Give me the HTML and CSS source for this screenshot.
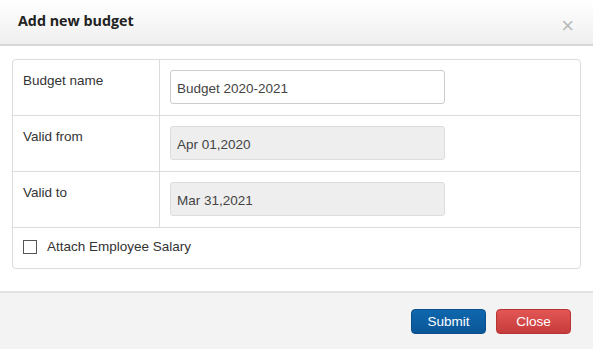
FILE: index.html
```html
<!DOCTYPE html>
<html lang="en">
<head>
    <meta charset="UTF-8">
    <title>Add new budget</title>
    <link rel="stylesheet" href="styles.css">
</head>
<body>

    <div class="modal">
        <!-- Заголовок -->
        <div class="modal-header">
            <h4>Add new budget</h4>
            <span class="close">&times;</span>
        </div>

        <!-- Форма -->
        <div class="modal-body">
            <div class="panel">
                <div class="row">
                    <div class="label">Budget name</div>
                    <div class="field"><input type="text" value="Budget 2020-2021"></div>
                </div>
                <div class="row">
                    <div class="label">Valid from</div>
                    <div class="field"><input type="text" value="Apr 01,2020" readonly></div>
                </div>
                <div class="row">
                    <div class="label">Valid to</div>
                    <div class="field"><input type="text" value="Mar 31,2021" readonly></div>
                </div>
                <label class="check-row">
                    <span class="checkbox"></span>
                    Attach Employee Salary
                </label>
            </div>
        </div>

        <div class="modal-footer">
            <button class="btn btn-primary">Submit</button>
            <button class="btn btn-danger">Close</button>
        </div>
    </div>

</body>
</html>
```

FILE: styles.css
```css
* {
    box-sizing: border-box;
    margin: 0;
    padding: 0;
}

body {
    font-family: 'Liberation Sans', Arial, sans-serif;
    font-size: 13.5px;
    color: #333;
    background: #fff;
}

.modal {
    width: 593px;
    height: 349px;
    display: flex;
    flex-direction: column;
}

/* Заголовок */
.modal-header {
    height: 46px;
    background: linear-gradient(#fff, #efefef);
    border-bottom: 2px solid #d6d6d6;
    display: flex;
    justify-content: space-between;
    align-items: center;
    padding: 0 19px 0 18px;
}

.modal-header h4 {
    font-family: 'Open Sans', sans-serif;
    font-size: 14.3px;
    font-weight: bold;
    color: #222;
    margin-top: -4px;
}

.close {
    font-family: 'Liberation Sans', sans-serif;
    font-size: 22px;
    color: #bbb;
    margin-top: 7px;
}

/* Тело */
.modal-body {
    flex: 1;
    padding: 13px 12px 0 12px;
    border-bottom: 2px solid #e2e2e2;
}

.panel {
    border: 1px solid #dcdcdc;
    border-radius: 4px;
    width: 569px;
}

.row {
    display: flex;
    height: 56px;
    border-bottom: 1px solid #dcdcdc;
}

.label {
    width: 147px;
    border-right: 1px solid #dcdcdc;
    padding: 13px 10px;
}

.field {
    flex: 1;
    padding: 10px 10px;
}

.field input {
    width: 275px;
    height: 34px;
    border: 1px solid #ccc;
    border-radius: 3px;
    padding: 2px 6px 0;
    font-family: 'Liberation Sans', Arial, sans-serif;
    font-size: 13.5px;
    color: #444;
    background: #fff;
    outline: none;
}

.field input[readonly] {
    background: #eee;
    border-color: #ddd;
}

.check-row {
    display: flex;
    align-items: center;
    gap: 10px;
    height: 43px;
    padding: 0 10px;
    margin-top: -3px;
}

.checkbox {
    width: 14px;
    height: 14px;
    border: 1px solid #555;
    background: #fff;
}

/* Низ */
.modal-footer {
    height: 56px;
    background: #f3f3f3;
    display: flex;
    justify-content: flex-end;
    align-items: center;
    gap: 10px;
    padding: 0 22px 0 0;
}

.btn {
    width: 75px;
    height: 25px;
    border-radius: 4px;
    border: 1px solid;
    color: #fff;
    font-family: 'Liberation Sans', Arial, sans-serif;
    font-size: 13.5px;
}

.btn-primary {
    background: linear-gradient(#0f67ad, #0a5698);
    border-color: #0a4e8a;
}

.btn-danger {
    background: linear-gradient(#e35656, #c63b3b);
    border-color: #b83434;
}
```
